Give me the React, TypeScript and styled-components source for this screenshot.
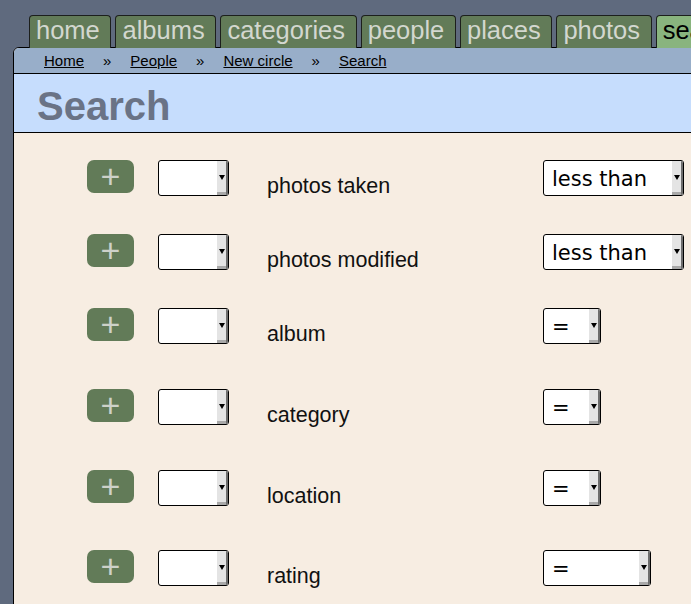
import React from "react";
import styled, { createGlobalStyle } from "styled-components";

const Global = createGlobalStyle`
  html, body { margin: 0; padding: 0; background: #5f6a7e; }
  body { overflow: hidden; font-family: "Liberation Sans", Arial, sans-serif; }
`;

const Page = styled.div`
  width: 691px;
  height: 604px;
  overflow: hidden;
  box-sizing: border-box;
  padding: 15px 0 0 13px;
  background: #5f6a7e;
`;

const TabBar = styled.nav`
  display: flex;
  gap: 4px;
  padding-left: 16px;
  position: relative;
  z-index: 1;
  white-space: nowrap;
`;

const Tab = styled.a<{ $active?: boolean }>`
  flex: none;
  display: block;
  height: 32px;
  line-height: 28px;
  padding: 0 10.7px 0 6px;
  border: 1px solid #1c1f1c;
  border-bottom: none;
  border-radius: 4px 4px 0 0;
  background: ${(p) => (p.$active ? "#89b47e" : "#627b58")};
  color: ${(p) => (p.$active ? "#000" : "#d3d7cf")};
  font-size: 25.5px;
  text-decoration: none;
`;

const Panel = styled.main`
  width: 760px;
  margin-top: -1px;
  border: 1px solid #000;
  border-radius: 6px 0 0 0;
  background: #f7ede2;
  overflow: hidden;
  height: 700px;
`;

const Crumbs = styled.div`
  display: flex;
  gap: 19px;
  height: 21px;
  padding: 4px 0 0 30px;
  background: #98aec9;
  border-bottom: 1px solid #000;
  font-size: 15px;
  line-height: 17px;
  color: #000;
`;

const CrumbLink = styled.a`
  color: #000;
  text-decoration: underline;
`;

const Heading = styled.h1`
  margin: 0;
  height: 49px;
  padding: 9px 0 0 23px;
  background: #c6ddfd;
  border-bottom: 1px solid #000;
  font-size: 40px;
  line-height: 46px;
  font-weight: bold;
  color: #6a7386;
`;

const Rows = styled.div`
  padding-top: 27px;
`;

const Row = styled.div<{ $h: number }>`
  display: grid;
  grid-template-columns: 47px 71px 266px auto;
  column-gap: 24px;
  align-items: start;
  padding-left: 73px;
  height: ${(p) => p.$h}px;
`;

const AddButton = styled.button`
  width: 47px;
  height: 33px;
  border: none;
  border-radius: 7px;
  padding: 0;
  background: #627b58;
  color: #cdd1c9;
  font: 34px/33px "Liberation Sans", Arial, sans-serif;
`;

const SelectBox = styled.div<{ $w: number }>`
  position: relative;
  width: ${(p) => p.$w}px;
  height: 36px;
  box-sizing: border-box;
  border: 1px solid #000;
  border-radius: 3px;
  background: #fff;
  padding: 1px 0 0 8px;
  font: 21px/34px "DejaVu Sans", sans-serif;
  color: #000;
  overflow: hidden;
  white-space: nowrap;
`;

const Arrow = styled.span`
  position: absolute;
  right: 0;
  top: 0;
  bottom: 0;
  width: 11px;
  background: #e4e4e4;
  box-shadow: inset -2px 0 0 #6d6d6d, inset 0 -3px 0 #a9a9a9;
  &::after {
    content: "";
    position: absolute;
    left: 2px;
    top: 14px;
    border-left: 3px solid transparent;
    border-right: 3px solid transparent;
    border-top: 5px solid #000;
  }
`;

const Label = styled.div`
  margin-top: 14px;
  padding-left: 14px;
  font-size: 21.5px;
  color: #111;
  white-space: nowrap;
`;

const Select = ({ w, value }: { w: number; value?: string }) => (
  <SelectBox $w={w}>
    {value}
    <Arrow />
  </SelectBox>
);

const tabs = ["home", "albums", "categories", "people", "places", "photos", "search"];

const rows = [
  { label: "photos taken", op: "less than", w: 141, h: 74 },
  { label: "photos modified", op: "less than", w: 141, h: 74 },
  { label: "album", op: "=", w: 58, h: 81 },
  { label: "category", op: "=", w: 58, h: 81 },
  { label: "location", op: "=", w: 58, h: 80 },
  { label: "rating", op: "=", w: 108, h: 80 },
];

export default function App() {
  return (
    <>
      <Global />
      <Page>
        <TabBar>
          {tabs.map((t) => (
            <Tab key={t} href="#" $active={t === "search"}>
              {t}
            </Tab>
          ))}
        </TabBar>
        <Panel>
          <Crumbs>
            <CrumbLink href="#">Home</CrumbLink>
            <span>»</span>
            <CrumbLink href="#">People</CrumbLink>
            <span>»</span>
            <CrumbLink href="#">New circle</CrumbLink>
            <span>»</span>
            <CrumbLink href="#">Search</CrumbLink>
          </Crumbs>
          <Heading>Search</Heading>
          <Rows>
            {rows.map((r) => (
              <Row key={r.label} $h={r.h}>
                <AddButton>+</AddButton>
                <Select w={71} />
                <Label>{r.label}</Label>
                <Select w={r.w} value={r.op} />
              </Row>
            ))}
          </Rows>
        </Panel>
      </Page>
    </>
  );
}
